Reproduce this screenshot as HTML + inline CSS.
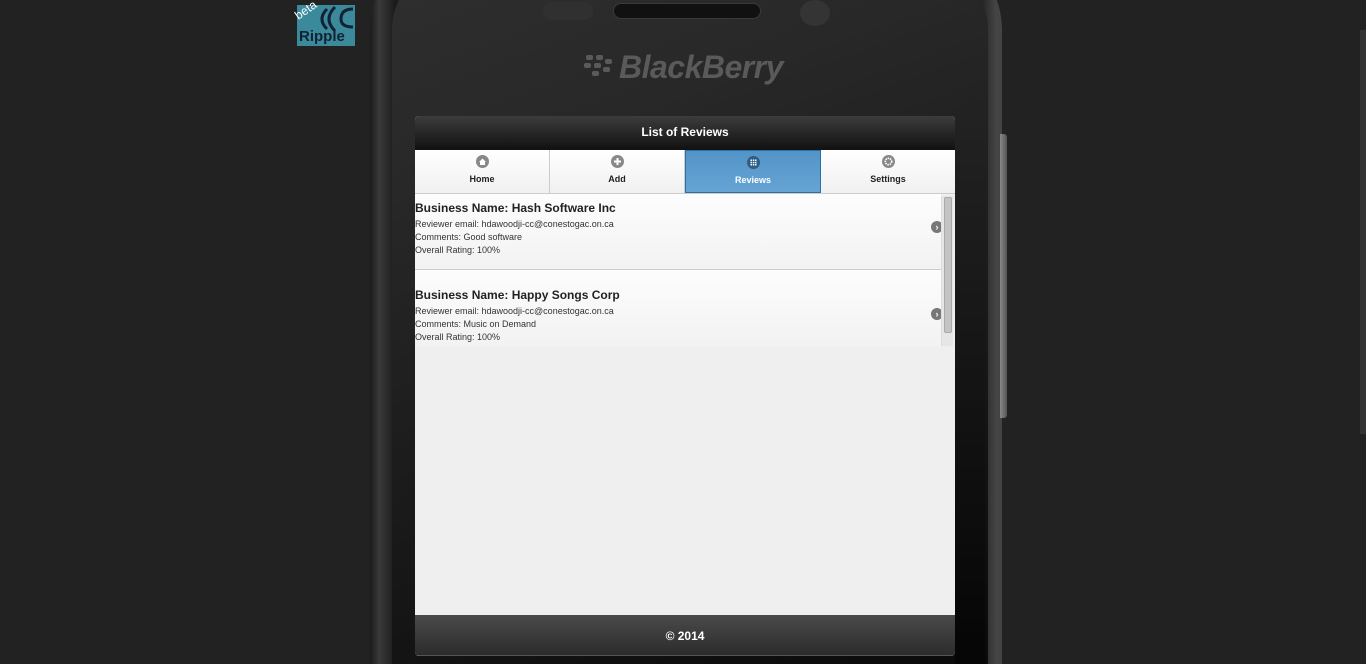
<!DOCTYPE html>
<html><head><meta charset="utf-8">
<style>
*{margin:0;padding:0;box-sizing:border-box}
html{width:1366px;height:664px;overflow:hidden;background:#222}
body{width:1366px;height:664px;background:#222;overflow:hidden;position:relative;font-family:"Liberation Sans",Arial,sans-serif}
.phone{position:absolute;left:370px;top:-60px;width:632px;height:724px;border-radius:90px 90px 0 0;background:linear-gradient(90deg,#1b1b1b,#3a3a3a 1.5%,#1a1a1a 4%,#222 7%,#222 93%,#1a1a1a 96%,#444 99%);}
.face{position:absolute;left:392px;top:-40px;width:596px;height:704px;border-radius:70px 70px 0 0;background:linear-gradient(160deg,#2f2f2f 0%,#282828 25%,#1c1c1c 55%,#0a0a0a 100%)}
.side{position:absolute;left:1000px;top:134px;width:7px;height:284px;background:linear-gradient(90deg,#888,#555);border-radius:0 3px 3px 0}
.spk{position:absolute;left:613px;top:3px;width:148px;height:16px;border-radius:8px;background:#111;border:1px solid #3a3a3a}
.spk2{position:absolute;left:543px;top:2px;width:50px;height:18px;border-radius:9px;background:#303030}
.cam{position:absolute;left:800px;top:0;width:30px;height:26px;border-radius:50%;background:#343434}
.bb{position:absolute;left:583px;top:49px;color:#5a5a5a;font:italic bold 32px "Liberation Sans",sans-serif;letter-spacing:-0.5px}
.bb span{margin-left:36px}
.ripple{position:absolute;left:297px;top:5px;width:58px;height:41px;background:#3a8a9c}
.ripple .t{position:absolute;left:2px;bottom:1px;color:#123;font:bold 15px "Liberation Sans",sans-serif}
.beta{position:absolute;left:294px;top:3px;color:#fff;font-size:12px;transform:rotate(-35deg)}
.screen{position:absolute;left:415px;top:116px;width:540px;height:540px;background:#efefef;border-radius:4px;overflow:hidden}
.hdr{height:34px;background:linear-gradient(#3c3c3c,#111);color:#fff;font-weight:bold;font-size:12px;text-align:center;line-height:32px}
.nav{display:flex;height:44px;border-bottom:1px solid #ccc}
.nav div{flex:1;background:linear-gradient(#fff,#f0f0f0);border-right:1px solid #ccc;text-align:center;font-size:9px;font-weight:bold;color:#222;padding-top:5px}
.nav div.a{background:linear-gradient(#5394c8,#65a4d4);color:#fff;border:1px solid #2a6fa5}
.nav svg{display:block;margin:0 auto 6px}
.item{position:relative;height:76px;border-bottom:1px solid #ccc;background:linear-gradient(#fdfdfd,#f2f2f2);width:526px;padding-top:7px}
.item h3{font-size:12px;color:#222;margin-bottom:3px}
.item p{font-size:9px;color:#333;line-height:13px}
.arr{position:absolute;right:-2px;top:27px;width:12px;height:12px;border-radius:50%;background:#777;color:#fff;font-size:9px;line-height:12px;text-align:center;font-weight:bold}
.sb{position:absolute;left:941px;top:196px;width:12px;height:150px;background:#e6e6e6;border-left:1px solid #ddd}
.sb div{position:absolute;left:2px;top:1px;width:8px;height:136px;background:#c4c4c4;border:1px solid #aaa;border-radius:2px}
.ftr{position:absolute;left:0;bottom:0;width:540px;height:41px;background:linear-gradient(#4a4a4a,#2c2c2c);color:#fff;font-weight:bold;font-size:12px;text-align:center;line-height:42px;border-bottom:1px solid #555}
.rshade{position:absolute;left:955px;top:116px;width:30px;height:548px;background:linear-gradient(#222,#050505)}
</style></head><body>
<div class="phone"></div>
<div class="face"></div>
<div class="rshade"></div>
<div class="side"></div>
<div class="spk2"></div><div class="spk"></div><div class="cam"></div>
<div class="bb"><svg width="30" height="22" style="position:absolute;left:0;top:6px"><g fill="#5a5a5a"><rect x="3" y="0" width="7" height="5" rx="2"/><rect x="13" y="0" width="7" height="5" rx="2"/><rect x="1" y="8" width="7" height="5" rx="2"/><rect x="11" y="8" width="7" height="5" rx="2"/><rect x="22" y="4" width="7" height="5" rx="2"/><rect x="9" y="16" width="7" height="5" rx="2"/><rect x="20" y="12" width="7" height="5" rx="2"/></g></svg><span>BlackBerry</span></div>
<div class="ripple"><svg width="58" height="28" style="position:absolute;left:0;top:0"><path d="M30 4 Q20 14 30 24 M38 2 Q26 14 38 26 M56 4 Q44 4 44 14 Q44 22 56 22" stroke="#123" stroke-width="3" fill="none"/></svg><span class="t">Ripple</span></div>
<div class="beta">beta</div>
<div class="screen">
<div class="hdr">List of Reviews</div>
<div class="nav">
<div><svg width="13" height="13"><circle cx="6.5" cy="6.5" r="6.5" fill="#888"/><path d="M3 7 L6.5 3.5 L10 7 L9 7 L9 10 L4 10 L4 7Z" fill="#fff"/></svg>Home</div>
<div><svg width="13" height="13"><circle cx="6.5" cy="6.5" r="6.5" fill="#888"/><path d="M6.5 3v7M3 6.5h7" stroke="#fff" stroke-width="2"/></svg>Add</div>
<div class="a"><svg width="13" height="13"><circle cx="6.5" cy="6.5" r="6.5" fill="#2f5d86"/><g fill="#fff"><rect x="3.5" y="3.5" width="1.5" height="1.5"/><rect x="5.8" y="3.5" width="1.5" height="1.5"/><rect x="8" y="3.5" width="1.5" height="1.5"/><rect x="3.5" y="5.8" width="1.5" height="1.5"/><rect x="5.8" y="5.8" width="1.5" height="1.5"/><rect x="8" y="5.8" width="1.5" height="1.5"/><rect x="3.5" y="8" width="1.5" height="1.5"/><rect x="5.8" y="8" width="1.5" height="1.5"/><rect x="8" y="8" width="1.5" height="1.5"/></g></svg>Reviews</div>
<div style="border-right:none"><svg width="13" height="13"><circle cx="6.5" cy="6.5" r="6.5" fill="#888"/><circle cx="6.5" cy="6.5" r="3.2" fill="none" stroke="#fff" stroke-width="1.6" stroke-dasharray="1.5 0.8"/><circle cx="6.5" cy="6.5" r="1.2" fill="#888"/></svg>Settings</div>
</div>
<div class="item"><h3>Business Name: Hash Software Inc</h3><p>Reviewer email: hdawoodji-cc@conestogac.on.ca<br>Comments: Good software<br>Overall Rating: 100%</p><span class="arr">›</span></div>
<div class="item" style="height:77px;padding-top:18px;border-bottom:none"><h3>Business Name: Happy Songs Corp</h3><p>Reviewer email: hdawoodji-cc@conestogac.on.ca<br>Comments: Music on Demand<br>Overall Rating: 100%</p><span class="arr" style="top:38px">›</span></div>
<div class="ftr">© 2014</div>
</div>
<div class="sb"><div></div></div>
<div style="position:absolute;left:1360px;top:30px;width:6px;height:404px;background:#333"></div>
</body></html>
